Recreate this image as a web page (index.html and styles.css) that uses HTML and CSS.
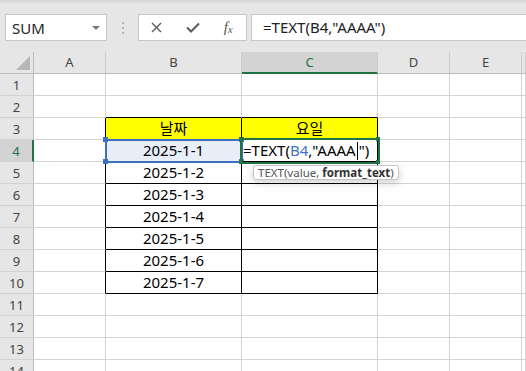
FILE: index.html
```html
<!DOCTYPE html>
<html lang="ko">
<head>
  <meta charset="UTF-8">
  <title>TEXT 함수 요일</title>
  <link rel="stylesheet" href="styles.css">
</head>
<body>

<div class="top-edge"></div>

<div class="formula-bar">
  <div class="name-box"><span>SUM</span><i class="caret"></i></div>
  <div class="grip"><i></i><i></i><i></i></div>
  <div class="fx-buttons">
    <span class="btn">
      <svg width="11" height="11" viewBox="0 0 11 11"><path d="M1 1 L10 10 M10 1 L1 10" stroke="#5a5a5a" stroke-width="1.4" fill="none"/></svg>
    </span>
    <span class="btn">
      <svg width="14" height="11" viewBox="0 0 14 11"><path d="M1 5.5 L5 9.5 L13 1.5" stroke="#5a5a5a" stroke-width="2" fill="none"/></svg>
    </span>
    <span class="btn fx">f<small>x</small></span>
  </div>
  <div class="formula-input">=TEXT(B4,"AAAA")</div>
</div>

<div class="sheet">
  <div class="corner">
    <svg width="14" height="14" viewBox="0 0 14 14"><polygon points="14,0 14,14 0,14" fill="#b6b6b6"/></svg>
  </div>
  <div class="ch">A</div>
  <div class="ch">B</div>
  <div class="ch on">C</div>
  <div class="ch">D</div>
  <div class="ch">E</div>
  <div class="ch"></div>

  <div class="rh">1</div>
  <div class="c"></div><div class="c"></div><div class="c"></div><div class="c"></div><div class="c"></div><div class="c"></div>

  <div class="rh">2</div>
  <div class="c"></div><div class="c above"></div><div class="c above"></div><div class="c"></div><div class="c"></div><div class="c"></div>

  <div class="rh">3</div>
  <div class="c before"></div><div class="c t hd">날짜</div><div class="c t hd">요일</div><div class="c"></div><div class="c"></div><div class="c"></div>

  <div class="rh on">4</div>
  <div class="c before"></div>
  <div class="c t ref">2025-1-1
    <span class="hb tl"></span><span class="hb tr"></span><span class="hb bl"></span><span class="hb br"></span>
  </div>
  <div class="c t editing">=TEXT(<span class="refname">B4</span>,"AAAA<i class="cursor"></i>")
    <span class="hg tl"></span><span class="hg tr"></span><span class="hg bl"></span><span class="hg br"></span>
  </div>
  <div class="c"></div><div class="c"></div><div class="c"></div>

  <div class="rh">5</div>
  <div class="c before"></div><div class="c t">2025-1-2</div><div class="c t"></div><div class="c"></div><div class="c"></div><div class="c"></div>

  <div class="rh">6</div>
  <div class="c before"></div><div class="c t">2025-1-3</div><div class="c t"></div><div class="c"></div><div class="c"></div><div class="c"></div>

  <div class="rh">7</div>
  <div class="c before"></div><div class="c t">2025-1-4</div><div class="c t"></div><div class="c"></div><div class="c"></div><div class="c"></div>

  <div class="rh">8</div>
  <div class="c before"></div><div class="c t">2025-1-5</div><div class="c t"></div><div class="c"></div><div class="c"></div><div class="c"></div>

  <div class="rh">9</div>
  <div class="c before"></div><div class="c t">2025-1-6</div><div class="c t"></div><div class="c"></div><div class="c"></div><div class="c"></div>

  <div class="rh">10</div>
  <div class="c before"></div><div class="c t">2025-1-7</div><div class="c t"></div><div class="c"></div><div class="c"></div><div class="c"></div>

  <div class="rh">11</div>
  <div class="c"></div><div class="c"></div><div class="c"></div><div class="c"></div><div class="c"></div><div class="c"></div>

  <div class="rh">12</div>
  <div class="c"></div><div class="c"></div><div class="c"></div><div class="c"></div><div class="c"></div><div class="c"></div>

  <div class="rh">13</div>
  <div class="c"></div><div class="c"></div><div class="c"></div><div class="c"></div><div class="c"></div><div class="c"></div>

  <div class="rh">14</div>
  <div class="c"></div><div class="c"></div><div class="c"></div><div class="c"></div><div class="c"></div><div class="c"></div>

  <div class="tooltip">TEXT(value, <b>format_text</b>)</div>
</div>

</body>
</html>
```

FILE: styles.css
```css
* {
  box-sizing: border-box;
}
body {
  margin: 0;
  background: #e6e6e6;
  font-family: "Noto Sans", "Noto Sans CJK KR", sans-serif;
  overflow: hidden;
}
.top-edge {
  height: 4px;
  background: linear-gradient(#d3d3d3, #e6e6e6);
}

/* formula bar */
.formula-bar {
  display: flex;
  align-items: flex-start;
  height: 48px;
  padding: 10px 0 0 5px;
}
.name-box {
  display: flex;
  align-items: center;
  width: 102px;
  height: 27px;
  padding: 0 6px;
  background: #fff;
  border: 1px solid #c6c6c6;
  font-size: 15px;
  color: #262626;
}
.caret {
  margin-left: auto;
  width: 0;
  height: 0;
  border-left: 4px solid transparent;
  border-right: 4px solid transparent;
  border-top: 4px solid #7a7a7a;
}
.grip {
  width: 31px;
  height: 27px;
  display: flex;
  flex-direction: column;
  align-items: center;
  justify-content: center;
  gap: 3px;
}
.grip i {
  width: 2px;
  height: 2px;
  background: #b5b5b5;
}
.fx-buttons {
  display: flex;
  align-items: center;
  width: 109px;
  height: 27px;
  background: #fff;
  border: 1px solid #c6c6c6;
}
.btn {
  width: 36px;
  display: flex;
  justify-content: center;
  align-items: center;
}
.fx {
  font-family: "Liberation Serif", serif;
  font-style: italic;
  font-size: 15px;
  color: #555;
}
.fx small {
  font-size: 11px;
  position: relative;
  top: 1px;
}
.formula-input {
  flex: 1;
  height: 27px;
  margin-left: 4px;
  padding-left: 11px;
  background: #fff;
  border: 1px solid #c6c6c6;
  border-right: none;
  font-size: 15px;
  line-height: 25px;
  color: #222;
}

/* grid */
.sheet {
  position: relative;
  display: grid;
  grid-template-columns: 34px 72px 136px 136px 72px 72px 1fr;
  grid-auto-rows: 22px;
  background: #fff;
}
.corner {
  display: flex;
  justify-content: flex-end;
  align-items: flex-end;
  padding: 0 3px 3px 0;
  background: #e6e6e6;
  border-right: 1px solid #bcbcbc;
  border-bottom: 1px solid #bcbcbc;
}
.ch {
  background: #e6e6e6;
  border-right: 1px solid #cbcbcb;
  border-bottom: 1px solid #bcbcbc;
  text-align: center;
  font-size: 13px;
  line-height: 21px;
  color: #444;
}
.ch.on {
  background: #d3d3d3;
  color: #217346;
  border-bottom: 2px solid #217346;
}
.rh {
  background: #e6e6e6;
  border-right: 1px solid #bcbcbc;
  border-bottom: 1px solid #d2d2d2;
  text-align: center;
  font-size: 13px;
  line-height: 22px;
  color: #444;
}
.rh.on {
  background: #d3d3d3;
  color: #217346;
  border-right: 2px solid #217346;
}
.c {
  border-right: 1px solid #d4d4d4;
  border-bottom: 1px solid #d4d4d4;
  text-align: center;
  font-size: 15px;
  line-height: 21px;
  color: #000;
  white-space: nowrap;
}
.c.above {
  border-bottom-color: #000;
}
.c.before {
  border-right-color: #000;
}
.c.t {
  border-right-color: #000;
  border-bottom-color: #000;
}
.c.hd {
  background: #ffff00;
}

/* B4: referenced cell */
.c.ref {
  position: relative;
  z-index: 1;
  background: #e8eef8;
  outline: 2px solid #3f6fc0;
  outline-offset: -1px;
}
.hb,
.hg {
  position: absolute;
  width: 5px;
  height: 5px;
  background: #3f6fc0;
}
.hg {
  width: 4px;
  height: 4px;
  background: #217346;
}
.tl { left: -3px; top: -3px; }
.tr { right: -3px; top: -3px; }
.bl { left: -3px; bottom: -3px; }
.br { right: -3px; bottom: -3px; }

/* C4: cell being edited */
.c.editing {
  position: relative;
  z-index: 2;
  text-align: left;
  padding-left: 1px;
  outline: 2px solid #217346;
  outline-offset: 0;
}
.refname {
  color: #4472c4;
}
.cursor {
  display: inline-block;
  width: 1px;
  height: 18px;
  margin: 0 1px;
  background: #000;
  vertical-align: -4px;
}

.tooltip {
  position: absolute;
  left: 253px;
  top: 113px;
  z-index: 3;
  height: 15px;
  padding: 0 4px;
  background: #fff;
  border: 1px solid #c6c6c6;
  border-radius: 3px;
  box-shadow: 0 3px 8px rgba(0, 0, 0, 0.18);
  font-size: 11.5px;
  line-height: 13px;
  color: #555;
  white-space: nowrap;
}
.tooltip b {
  color: #333;
}
```
